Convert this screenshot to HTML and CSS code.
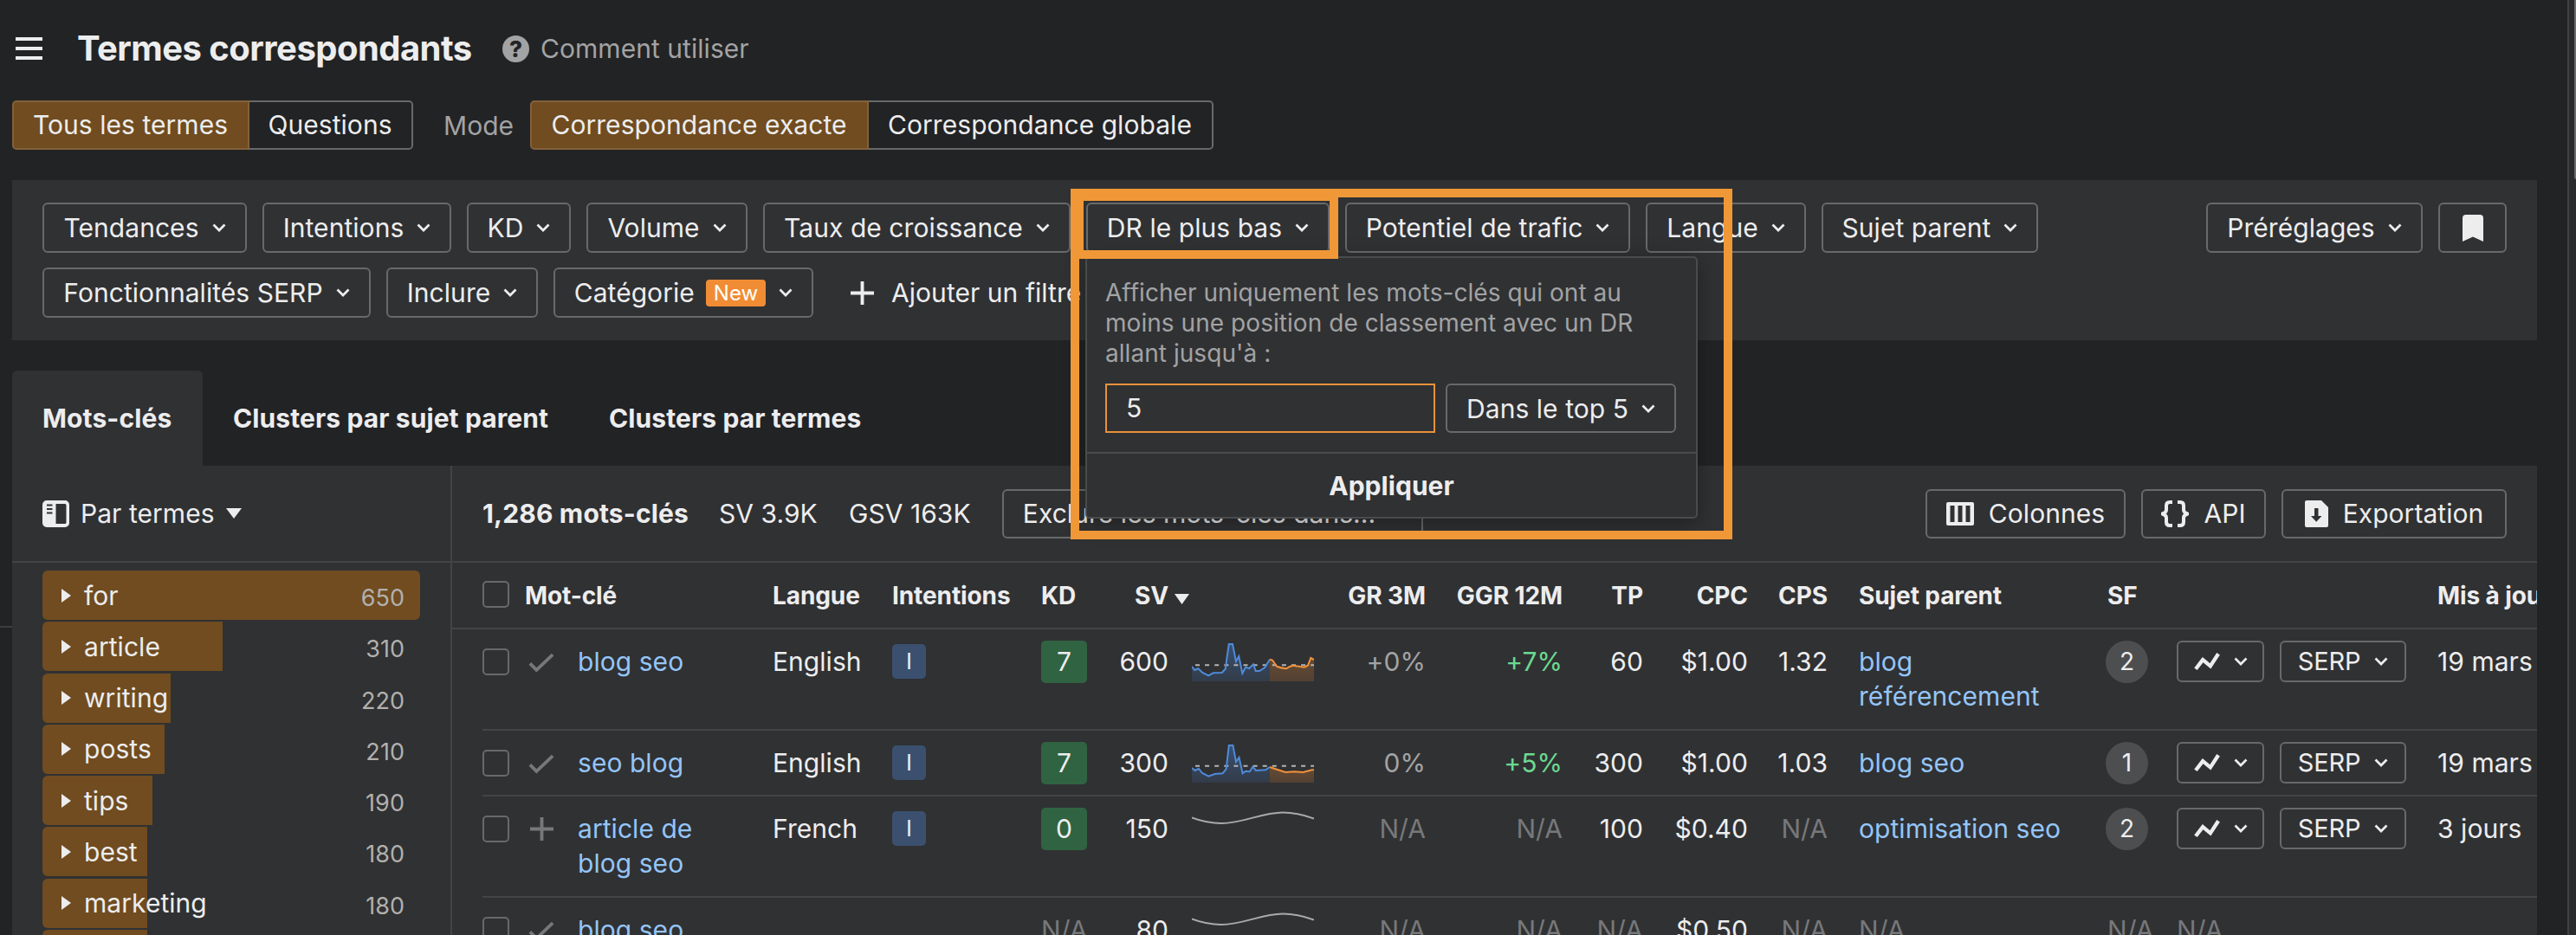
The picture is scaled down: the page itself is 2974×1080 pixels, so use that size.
FILE: index.html
```html
<!DOCTYPE html>
<html lang="fr">
<head>
    <meta charset="UTF-8">
    <meta name="viewport" content="width=device-width, initial-scale=1.0">
    <title>Termes correspondants</title>
    <link rel="stylesheet" href="styles.css">
</head>
<body>
    <!-- Icônes partagées -->
    <svg class="sprite" width="0" height="0">
        <linearGradient id="fill-blue" x1="0" y1="0" x2="0" y2="1">
            <stop offset="0" stop-color="#3f6fb0" stop-opacity=".5"/>
            <stop offset="1" stop-color="#3f6fb0" stop-opacity=".18"/>
        </linearGradient>
        <linearGradient id="fill-orange" x1="0" y1="0" x2="0" y2="1">
            <stop offset="0" stop-color="#e98932" stop-opacity=".3"/>
            <stop offset="1" stop-color="#e98932" stop-opacity=".18"/>
        </linearGradient>
        <symbol id="i-chevron" viewBox="0 0 16 10"><path d="M1.5 1.5 8 8l6.500-6.500" fill="none" stroke="currentColor" stroke-width="2.700"/></symbol>
        <symbol id="i-check" viewBox="0 0 32 24"><path d="M2 13l8 8L30 2" fill="none" stroke="currentColor" stroke-width="4"/></symbol>
        <symbol id="i-plus" viewBox="0 0 28 28"><path d="M14 0v28M0 14h28" fill="none" stroke="currentColor" stroke-width="4"/></symbol>
        <symbol id="i-trend" viewBox="0 0 31 22"><path d="M2 20 10.500 9l9 7.500L29 2" fill="none" stroke="currentColor" stroke-width="4.500"/></symbol>
        <symbol id="i-wave" viewBox="0 0 141 44"><path d="M0 8.500C12 13 22 15 34 15 60 15 80 2.500 105 2.500c13 0 25 3 36 7" fill="none" stroke="#a9aaab" stroke-width="2"/></symbol>
    </svg>

    <main class="page">
        <header class="header">
            <span class="burger"><i></i><i></i><i></i></span>
            <h1>Termes correspondants</h1>
            <a class="help"><b>?</b>Comment utiliser</a>
        </header>

        <div class="modes">
            <div class="segment">
                <span class="on seg-all">Tous les termes</span><span class="seg-questions">Questions</span>
            </div>
            <span class="modes-label">Mode</span>
            <div class="segment">
                <span class="on seg-exact">Correspondance exacte</span><span class="seg-global">Correspondance globale</span>
            </div>
        </div>

        <section class="filters">
            <div class="filters-row">
                <button class="btn w-236">Tendances<svg class="chev"><use href="#i-chevron"/></svg></button>
                <button class="btn w-218">Intentions<svg class="chev"><use href="#i-chevron"/></svg></button>
                <button class="btn w-120">KD<svg class="chev"><use href="#i-chevron"/></svg></button>
                <button class="btn w-186">Volume<svg class="chev"><use href="#i-chevron"/></svg></button>
                <button class="btn w-355">Taux de croissance<svg class="chev"><use href="#i-chevron"/></svg></button>
                <div class="dr">
                    <button class="btn w-281">DR le plus bas<svg class="chev"><use href="#i-chevron"/></svg></button>
                    <div class="popup">
                        <div class="popup-body">
                            <p>Afficher uniquement les mots-clés qui ont au<br>moins une position de classement avec un DR<br>allant jusqu'à :</p>
                            <div class="popup-fields">
                                <span class="input">5</span>
                                <button class="btn top5">Dans le top 5<svg class="chev"><use href="#i-chevron"/></svg></button>
                            </div>
                        </div>
                        <div class="popup-apply">Appliquer</div>
                    </div>
                    <div class="mark mark-panel"></div>
                    <div class="mark mark-button"></div>
                </div>
                <button class="btn w-329">Potentiel de trafic<svg class="chev"><use href="#i-chevron"/></svg></button>
                <button class="btn w-185">Langue<svg class="chev"><use href="#i-chevron"/></svg></button>
                <button class="btn w-250">Sujet parent<svg class="chev"><use href="#i-chevron"/></svg></button>
                <button class="btn w-250 presets">Préréglages<svg class="chev"><use href="#i-chevron"/></svg></button>
                <button class="btn w-79"><svg width="24" height="31" viewBox="0 0 24 31"><path d="M0 4a4 4 0 0 1 4-4h16a4 4 0 0 1 4 4v27l-12-5.500L0 31z" fill="currentColor"/></svg></button>
            </div>
            <div class="filters-row">
                <button class="btn w-379">Fonctionnalités SERP<svg class="chev"><use href="#i-chevron"/></svg></button>
                <button class="btn w-175">Inclure<svg class="chev"><use href="#i-chevron"/></svg></button>
                <button class="btn w-300">Catégorie<em class="new">New</em><svg class="chev"><use href="#i-chevron"/></svg></button>
                <span class="add-filter"><svg width="27" height="27"><use href="#i-plus"/></svg>Ajouter un filtre</span>
            </div>
        </section>

        <nav class="tabs">
            <a class="tab tab-active">Mots-clés</a>
            <a class="tab tab-parent">Clusters par sujet parent</a>
            <a class="tab">Clusters par termes</a>
        </nav>

        <section class="panel">
            <aside class="side">
                <div class="side-head">
                    <svg width="31" height="31" viewBox="0 0 31 31"><path fill="currentColor" fill-rule="evenodd" d="M5 0h21a5 5 0 0 1 5 5v21a5 5 0 0 1-5 5H5a5 5 0 0 1-5-5V5a5 5 0 0 1 5-5zm10.500 4v23H26a1.500 1.500 0 0 0 1.500-1.500v-20A1.500 1.500 0 0 0 26 4zM5 4.500V6.500h6.500V4.500zM5 9v2h6.500V9zM5 13.500v2h6.500v-2z"/></svg>
                    Par termes
                    <svg width="18" height="12" viewBox="0 0 18 12"><path d="M0 0h18L9 12z" fill="currentColor"/></svg>
                </div>
                <ul class="terms">
                    <li><span class="bar full" style="width: 436px"></span><i></i>for<b>650</b></li>
                    <li><span class="bar" style="width: 208px"></span><i></i>article<b>310</b></li>
                    <li><span class="bar" style="width: 148px"></span><i></i>writing<b>220</b></li>
                    <li><span class="bar" style="width: 141px"></span><i></i>posts<b>210</b></li>
                    <li><span class="bar" style="width: 127px"></span><i></i>tips<b>190</b></li>
                    <li><span class="bar" style="width: 121px"></span><i></i>best<b>180</b></li>
                    <li><span class="bar" style="width: 121px"></span><i></i>marketing<b>180</b></li>
                    <li><span class="bar" style="width: 121px"></span></li>
                </ul>
            </aside>

            <div class="results">
                <div class="toolbar">
                    <strong class="count">1,286 mots-clés</strong>
                    <span class="sv-total">SV 3.9K</span>
                    <span class="gsv-total">GSV 163K</span>
                    <button class="btn exclude">Exclure les mots-clés dans...<svg class="chev"><use href="#i-chevron"/></svg></button>
                    <div class="actions">
                        <button class="btn w-231"><svg width="32" height="27" viewBox="0 0 32 27"><path fill="currentColor" fill-rule="evenodd" d="M2 0h28a2 2 0 0 1 2 2v23a2 2 0 0 1-2 2H2a2 2 0 0 1-2-2V2a2 2 0 0 1 2-2zm2.500 4v19h5V4zm9 0v19h5V4zm9 0v19h5V4z"/></svg>Colonnes</button>
                        <button class="btn w-144"><svg width="32" height="31" viewBox="0 0 32 31"><path d="M13 2h-3q-4 0-4 4v5q0 3-4.500 4.500Q6 17 6 20v5q0 4 4 4h3M19 2h3q4 0 4 4v5q0 3 4.500 4.500Q26 17 26 20v5q0 4-4 4h-3" fill="none" stroke="currentColor" stroke-width="4"/></svg>API</button>
                        <button class="btn w-260"><svg width="27" height="31" viewBox="0 0 27 31"><path fill="currentColor" fill-rule="evenodd" d="M2 0h17l8 8v21a2 2 0 0 1-2 2H2a2 2 0 0 1-2-2V2a2 2 0 0 1 2-2zm9 9v9H7l6.200 6.800L19.500 18h-4V9z"/></svg>Exportation</button>
                    </div>
                </div>

                <div class="row head">
                    <span><i class="box"></i></span><span class="kw-head">Mot-clé</span><span>Langue</span><span>Intentions</span><span>KD</span><span class="r">SV</span><span class="sort"><svg width="17" height="12" viewBox="0 0 17 12"><path d="M0 0h17L8.500 12z" fill="currentColor"/></svg></span><span class="r">GR 3M</span><span class="r">GGR 12M</span><span class="r">TP</span><span class="r">CPC</span><span class="r">CPS</span><span class="parent">Sujet parent</span><span class="sf-col">SF</span><span></span><span></span><span>Mis à jour</span>
                </div>

                <div class="rows">
                    <div class="row">
                        <span><i class="box"></i></span>
                        <span><svg class="state" width="30" height="23"><use href="#i-check"/></svg></span>
                        <a>blog seo</a>
                        <span>English</span>
                        <span><i class="intent">I</i></span>
                        <span><i class="kd">7</i></span>
                        <span class="r">600</span>
                        <span class="spark"><svg width="141" height="44">
                            <path fill="url(#fill-blue)" d="M0 27 3.300 31l4-1.700 5 4.700 7 3.300 5.400-3 10-.3 4-4.300 4-29.200H47L51 21l3.300-6 4 19.700L62 27.700l4.300 1.300 4.700-4.700 2.700 7.700H78l6-3.700 6-9.600V44H0z"/>
                            <path fill="url(#fill-orange)" d="M90 18.700l3 .8 5 7.200 11 2.600 7.700-3.600 13 2 4.300-2L137.300 17l3.700 2v25H90z"/>
                            <path class="dash" d="M4 25.300h137"/>
                            <path class="blue" d="M0 27 3.300 31l4-1.700 5 4.700 7 3.300 5.400-3 10-.3 4-4.300 4-28.700H47L51 21l3.300-6 4 19.700L62 27.700l4.300 1.300 4.700-4.700 2.700 7.700H78l6-3.700 6-9.600"/>
                            <path class="orange" d="M90 18.700l3 .8 5 7.200q5 2 11 2.600 4-3 7.700-3.600l13 2 4.300-2L137.300 17l3.700 2"/>
                        </svg></span>
                        <span class="r soft">+0%</span>
                        <span class="r green">+7%</span>
                        <span class="r">60</span>
                        <span class="r">$1.00</span>
                        <span class="r">1.32</span>
                        <a class="parent">blog<br>référencement</a>
                        <span><i class="sf">2</i></span>
                        <span><button class="btn small w-101"><svg width="30" height="22"><use href="#i-trend"/></svg><svg class="chev"><use href="#i-chevron"/></svg></button></span>
                        <span><button class="btn small w-146">SERP<svg class="chev"><use href="#i-chevron"/></svg></button></span>
                        <span>19 mars</span>
                    </div>
                    <div class="row">
                        <span><i class="box"></i></span>
                        <span><svg class="state" width="30" height="23"><use href="#i-check"/></svg></span>
                        <a>seo blog</a>
                        <span>English</span>
                        <span><i class="intent">I</i></span>
                        <span><i class="kd">7</i></span>
                        <span class="r">300</span>
                        <span class="spark"><svg width="141" height="44">
                            <path fill="url(#fill-blue)" d="M0 27l3.500 3L8 28l4 5 7.300 3.700 7.200-2.700 9.100-.7 4.100-5.300L42.800.7h4.600L51 20l3.500-5 4.100 18.300 3.400-2.600 4.800.6 3.500-5.600L74 30l11-.7 5-3.300v18H0z"/>
                            <path fill="url(#fill-orange)" d="M90 26l8 2.700 10 3.300 10-.7 10.500.7 10.200-2.700H141V44H90z"/>
                            <path class="dash" d="M4 24.700h137"/>
                            <path class="blue" d="M0 27l3.500 3L8 28l4 5 7.300 3.700 7.200-2.700 9.100-.7 4.100-5.300L42.800.9h4.600L51 20l3.500-5 4.100 18.300 3.400-2.600 4.800.6 3.500-5.600L74 30l11-.7 5-3.300"/>
                            <path class="orange" d="M90 26l8 2.700 10 3.300 10-.7 10.500.7 10.200-2.700H141"/>
                        </svg></span>
                        <span class="r soft">0%</span>
                        <span class="r green">+5%</span>
                        <span class="r">300</span>
                        <span class="r">$1.00</span>
                        <span class="r">1.03</span>
                        <a class="parent">blog seo</a>
                        <span><i class="sf">1</i></span>
                        <span><button class="btn small w-101"><svg width="30" height="22"><use href="#i-trend"/></svg><svg class="chev"><use href="#i-chevron"/></svg></button></span>
                        <span><button class="btn small w-146">SERP<svg class="chev"><use href="#i-chevron"/></svg></button></span>
                        <span>19 mars</span>
                    </div>
                    <div class="row">
                        <span><i class="box"></i></span>
                        <span><svg class="state plus" width="27" height="27"><use href="#i-plus"/></svg></span>
                        <a>article de<br>blog seo</a>
                        <span>French</span>
                        <span><i class="intent">I</i></span>
                        <span><i class="kd">0</i></span>
                        <span class="r">150</span>
                        <span class="spark"><svg width="141" height="44"><use href="#i-wave"/></svg></span>
                        <span class="r na">N/A</span>
                        <span class="r na">N/A</span>
                        <span class="r">100</span>
                        <span class="r">$0.40</span>
                        <span class="r na">N/A</span>
                        <a class="parent">optimisation seo</a>
                        <span><i class="sf">2</i></span>
                        <span><button class="btn small w-101"><svg width="30" height="22"><use href="#i-trend"/></svg><svg class="chev"><use href="#i-chevron"/></svg></button></span>
                        <span><button class="btn small w-146">SERP<svg class="chev"><use href="#i-chevron"/></svg></button></span>
                        <span>3 jours</span>
                    </div>
                    <div class="row">
                        <span><i class="box"></i></span>
                        <span><svg class="state" width="30" height="23"><use href="#i-check"/></svg></span>
                        <a>blog seo</a>
                        <span></span>
                        <span></span>
                        <span class="na">N/A</span>
                        <span class="r">80</span>
                        <span class="spark"><svg width="141" height="44"><use href="#i-wave"/></svg></span>
                        <span class="r na">N/A</span>
                        <span class="r na">N/A</span>
                        <span class="r na">N/A</span>
                        <span class="r">$0.50</span>
                        <span class="r na">N/A</span>
                        <span class="parent na">N/A</span>
                        <span class="sf-col na">N/A</span>
                        <span class="na">N/A</span>
                        <span></span>
                        <span></span>
                    </div>
                </div>
            </div>
        </section>
        <div class="gutter-line"></div>
    </main>

    <div class="scrollbar"><div class="thumb"></div></div>
</body>
</html>
```
FILE: styles.css
```css
* {
    margin: 0;
    padding: 0;
    box-sizing: border-box;
}

body {
    display: flex;
    height: 1080px;
    overflow: hidden;
    font-family: Inter, "Liberation Sans", sans-serif;
    font-size: 30px;
    line-height: 40px;
    letter-spacing: 0.05px;
    color: #ededee;
    background: #222325;
    white-space: nowrap;
}

svg {
    flex: none;
}

i,
em {
    font-style: normal;
}

.sprite {
    position: absolute;
}

.page {
    flex: 1;
    min-width: 0;
    height: 1080px;
    padding: 28px 35px 0 14px;
    position: relative;
    overflow: hidden;
}

/* En-tête */
.header {
    display: flex;
    align-items: center;
    height: 56px;
    padding-left: 4px;
}

.burger {
    width: 31px;
    display: grid;
    gap: 7px;
    margin-right: 40px;
}

.burger i {
    height: 4px;
    background: #ededee;
}

h1 {
    width: 491px;
    font-size: 40px;
    font-weight: 700;
    letter-spacing: -0.55px;
}

.help {
    display: flex;
    align-items: center;
    color: #a2a3a4;
}

.help b {
    width: 31px;
    height: 31px;
    margin-right: 13px;
    border-radius: 50%;
    background: #a2a3a4;
    color: #222325;
    font-size: 26px;
    font-weight: 800;
    line-height: 31px;
    text-align: center;
}

.modes {
    display: flex;
    align-items: center;
    margin-top: 32px;
}

.segment {
    display: flex;
    height: 57px;
    border-radius: 5px;
}

.segment span {
    padding-right: 1px;
    border: 2px solid #68696b;
    border-left: 0;
    border-radius: 0 5px 5px 0;
    line-height: 53px;
    text-align: center;
}

.segment .on {
    border: 2px solid #83603a;
    border-radius: 5px 0 0 5px;
    background: #704c20;
}

.seg-all { width: 274px; }
.seg-questions { width: 189px; }
.seg-exact { width: 391px; }
.seg-global { width: 398px; }

.modes-label {
    width: 135px;
    padding-left: 35px;
    color: #a2a3a4;
}

.btn {
    display: flex;
    align-items: center;
    justify-content: center;
    flex: none;
    height: 58px;
    border: 2px solid #68696b;
    border-radius: 6px;
    background: transparent;
    color: inherit;
    font: inherit;
    letter-spacing: inherit;
    white-space: nowrap;
}

.chev {
    width: 16px;
    height: 10px;
    margin-left: 15px;
}

/* Filtres */
.filters {
    height: 185px;
    margin-top: 35px;
    padding: 26px 35px 0;
    background: #303133;
}

.filters-row {
    display: flex;
    gap: 18px;
    margin-bottom: 17px;
}

.w-79 { width: 79px; }
.w-101 { width: 101px; }
.w-120 { width: 120px; }
.w-144 { width: 144px; }
.w-146 { width: 146px; }
.w-175 { width: 175px; }
.w-185 { width: 185px; }
.w-186 { width: 186px; }
.w-218 { width: 218px; }
.w-231 { width: 231px; }
.w-236 { width: 236px; }
.w-250 { width: 250px; }
.w-260 { width: 260px; }
.w-281 { width: 281px; }
.w-300 { width: 300px; }
.w-329 { width: 329px; }
.w-355 { width: 355px; }
.w-379 { width: 379px; }

.presets {
    margin-left: auto;
}

.new {
    height: 31px;
    margin-left: 13px;
    padding: 0 9px;
    border-radius: 4px;
    background: #f08c34;
    color: #fff;
    font-size: 24px;
    line-height: 31px;
}

.add-filter {
    display: flex;
    align-items: center;
    gap: 20px;
    padding-left: 25px;
}

.dr {
    position: relative;
}

.popup {
    position: absolute;
    z-index: 2;
    top: 62px;
    left: -1px;
    width: 707px;
    border: 2px solid #4a4b4d;
    border-radius: 5px;
    background: #303133;
    box-shadow: 0 6px 24px rgba(0, 0, 0, 0.35);
}

.popup-body {
    height: 224px;
    padding: 23px 22px 0 21px;
}

.popup p {
    color: #a2a3a4;
    font-size: 28px;
    line-height: 35px;
}

.popup-fields {
    display: flex;
    justify-content: space-between;
    margin-top: 17px;
    padding-right: 1px;
}

.input {
    width: 381px;
    height: 57px;
    padding-left: 22px;
    border: 2px solid #e8913a;
    line-height: 53px;
}

.top5 {
    width: 266px;
    height: 57px;
}

.popup-apply {
    height: 75px;
    border-top: 2px solid #4a4b4d;
    font-weight: 700;
    line-height: 75px;
    text-align: center;
}

/* Cadres de mise en évidence */
.mark {
    position: absolute;
    z-index: 3;
    border: 10px solid #f09837;
}

.mark-panel {
    top: -16px;
    left: -18px;
    width: 764px;
    height: 405px;
}

.mark-button {
    top: -12px;
    left: -13px;
    width: 304px;
    height: 77px;
}

/* Onglets */
.tabs {
    display: flex;
    height: 110px;
    margin-top: 35px;
    font-weight: 700;
    letter-spacing: 0.1px;
}

.tab {
    padding: 0 35px;
    line-height: 110px;
}

.tab-active {
    width: 220px;
    border-radius: 6px 6px 0 0;
    background: #303133;
}

.tab-parent {
    width: 434px;
}

.panel {
    display: flex;
    height: 560px;
    background: #303133;
    overflow: hidden;
}

.side {
    width: 508px;
    flex: none;
    border-right: 2px solid #434446;
}

.side-head {
    display: flex;
    align-items: center;
    gap: 13px;
    height: 112px;
    padding-left: 35px;
    border-bottom: 2px solid #434446;
}

.terms {
    padding: 9px 35px 0;
    list-style: none;
}

.terms li {
    display: flex;
    align-items: center;
    position: relative;
    isolation: isolate;
    height: 57px;
    margin-bottom: 2.300px;
    padding-left: 22px;
}

.terms .bar {
    position: absolute;
    z-index: -1;
    top: 0;
    left: 0;
    height: 57px;
    border-radius: 6px 0 0 6px;
    background: #704c20;
}

.terms .full {
    border-radius: 6px;
}

.terms i {
    margin-right: 15px;
    border: solid transparent;
    border-width: 8px 0 8px 11px;
    border-left-color: #ededee;
}

.terms b {
    margin: 7px 18px 0 auto;
    color: #b2b0ad;
    font-size: 27px;
    font-weight: 400;
}

/* Résultats */
.results {
    flex: 1;
    min-width: 0;
}

.toolbar {
    display: flex;
    align-items: center;
    height: 112px;
    padding: 0 35px;
    border-bottom: 2px solid #434446;
}

.toolbar .btn {
    height: 57px;
}

.count {
    width: 273px;
    letter-spacing: 0.15px;
}

.sv-total { width: 150px; }
.gsv-total { width: 177px; }
.exclude { width: 486px; }

.actions {
    display: flex;
    gap: 18px;
    margin-left: auto;
}

.actions svg {
    margin-right: 17px;
}

.row {
    display: grid;
    grid-template-columns: 49px 61px 225px 138px 172px 52px 95px 168px 129px 158px 93px 121px 92px 321px 82px 119px 182px 1fr;
    padding: 17px 0 17.700px;
    border-bottom: 2px solid #434446;
}

.row > * {
    min-width: 0;
}

.head {
    padding: 18px 0 17px 35px;
    font-size: 28px;
    font-weight: 700;
    letter-spacing: -0.1px;
}

.rows {
    margin-left: 35px;
}

.rows a {
    color: #94c5f8;
}

.kw-head {
    grid-column: span 2;
}

.r {
    text-align: right;
}

.sort svg {
    display: block;
    margin: 18px 0 0 7px;
}

.parent {
    padding-left: 36px;
}

.sf-col {
    padding-left: 2px;
}

.box {
    display: block;
    width: 31px;
    height: 31px;
    margin-top: 5px;
    border: 2px solid #68696b;
    border-radius: 5px;
}

.head .box {
    margin-top: 3px;
}

.state {
    display: block;
    margin: 10px 0 0 4px;
    color: #77787a;
}

.plus {
    margin: 7px 0 0 6px;
}

.intent {
    display: block;
    width: 39px;
    height: 40px;
    border-radius: 5px;
    background: #3b506f;
    font-size: 26px;
    text-align: center;
}

.kd {
    display: block;
    width: 53px;
    height: 49px;
    margin: -4px -1px -5px 0;
    border-radius: 5px;
    background: #306341;
    line-height: 49px;
    text-align: center;
}

.spark svg {
    display: block;
    margin: -1px 0 -3px 27px;
}

.spark path {
    stroke-width: 2;
}

.blue {
    fill: none;
    stroke: #4e8bdb;
}

.orange {
    fill: none;
    stroke: #f0923c;
}

.dash {
    stroke: #b4b4b4;
    stroke-dasharray: 5 6.100;
}

.soft { color: #a2a3a4; }
.green { color: #6bd990; }
.na { color: #77787a; }

.sf {
    display: block;
    width: 49px;
    height: 49px;
    margin: -4px 0 -5px;
    border-radius: 50%;
    background: #4d4e50;
    font-size: 28px;
    line-height: 49px;
    text-align: center;
}

.small {
    height: 48px;
    margin: -4px 0;
    font-size: 29px;
    letter-spacing: -0.2px;
}

.small .chev {
    margin-left: 16px;
}

/* Bord gauche et barre de défilement */
.gutter-line {
    position: absolute;
    top: 723px;
    left: 0;
    width: 14px;
    height: 2px;
    background: #3c3d3f;
}

.scrollbar {
    width: 10px;
    border-left: 2px solid #414243;
    background: #2b2b2c;
}

.thumb {
    width: 2px;
    height: 207px;
    margin-left: 6px;
    border-bottom-left-radius: 2px;
    background: #6b6b6b;
}
```
